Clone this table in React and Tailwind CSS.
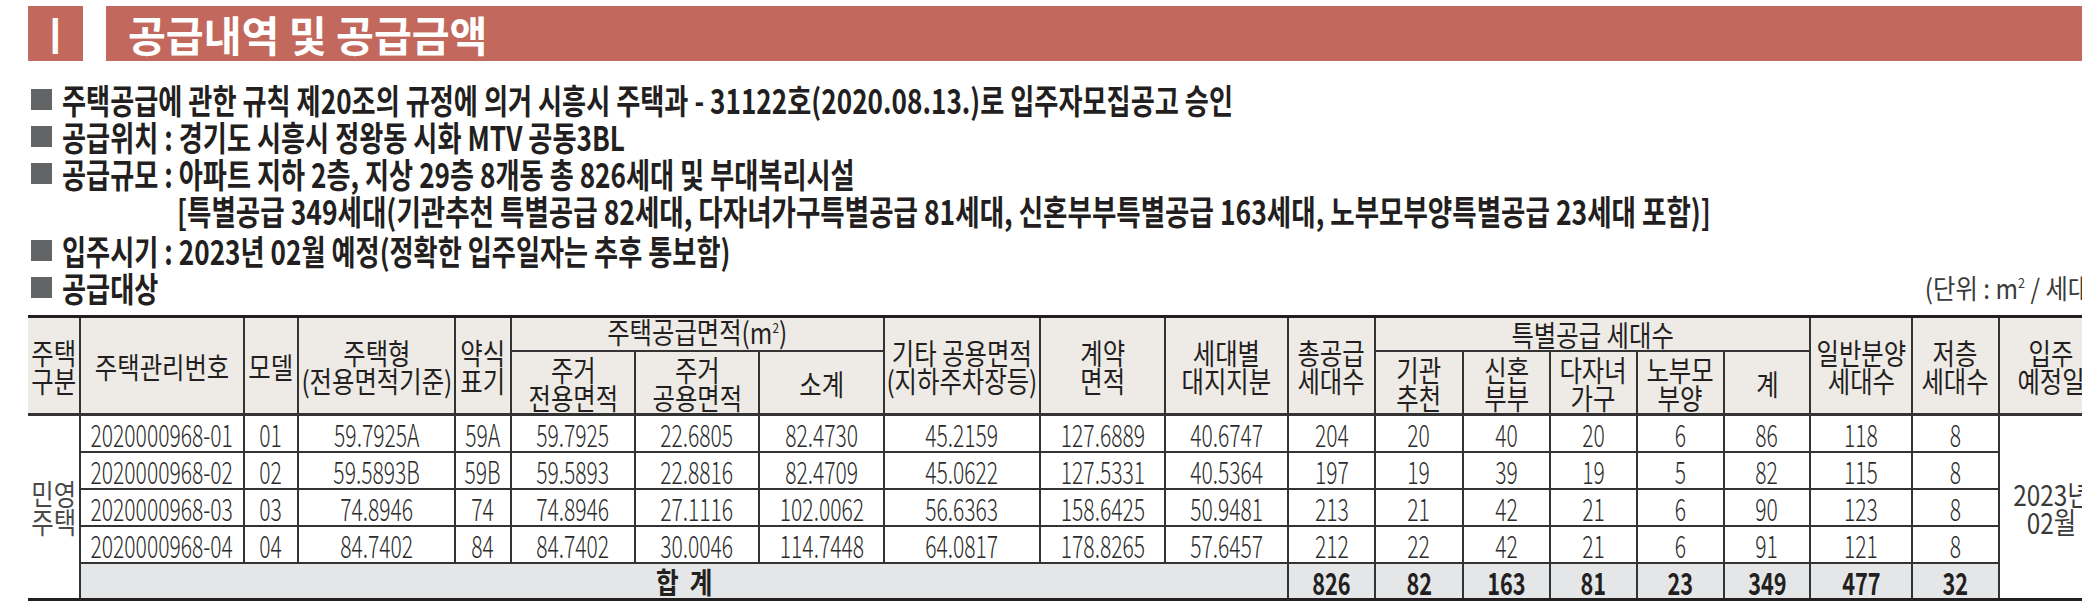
import React from "react";

const rows = [
  ["2020000968-01", "01", "59.7925A", "59A", "59.7925", "22.6805", "82.4730", "45.2159", "127.6889", "40.6747", "204", "20", "40", "20", "6", "86", "118", "8"],
  ["2020000968-02", "02", "59.5893B", "59B", "59.5893", "22.8816", "82.4709", "45.0622", "127.5331", "40.5364", "197", "19", "39", "19", "5", "82", "115", "8"],
  ["2020000968-03", "03", "74.8946", "74", "74.8946", "27.1116", "102.0062", "56.6363", "158.6425", "50.9481", "213", "21", "42", "21", "6", "90", "123", "8"],
  ["2020000968-04", "04", "84.7402", "84", "84.7402", "30.0046", "114.7448", "64.0817", "178.8265", "57.6457", "212", "22", "42", "21", "6", "91", "121", "8"],
];
const sums = ["826", "82", "163", "81", "23", "349", "477", "32"];

const hCell = "flex items-center justify-center bg-[#eeeae6] border-r-2 border-[#333]";
const hText = "whitespace-nowrap text-center text-[29px] leading-[28px] scale-x-[0.84] text-[#231f20]";
const dCell = "flex items-center justify-center bg-white border-r-2 border-b-2 border-[#333]";
const dText = "whitespace-nowrap text-[31px] leading-none font-light scale-x-[0.68] text-[#2b2b2b]";
const sCell = "flex items-center justify-center bg-[#e5e6e7] border-r-2 border-[#333]";
const sText = "whitespace-nowrap text-[31px] leading-none font-bold scale-x-[0.7] text-[#231f20]";

function H({ span, lines, bottom }) {
  return (
    <div className={`${hCell} ${span} ${bottom}`}>
      <div className={hText}>
        {lines.map((l, i) => (
          <div key={i}>{l}</div>
        ))}
      </div>
    </div>
  );
}

function M2() {
  return (
    <>
      m<span className="relative -top-[11px] text-[14px]">2</span>
    </>
  );
}

function Bullet({ children }) {
  return (
    <div className="flex h-[37px] items-center">
      <div className="ml-[3px] mr-[10px] h-[21px] w-[21px] shrink-0 bg-[#636466]" />
      <span className="inline-block origin-left scale-x-[0.77] whitespace-nowrap text-[34px] font-bold leading-[37px] text-[#231f20]">
        {children}
      </span>
    </div>
  );
}

export default function App() {
  return (
    <div className="h-[601px] w-[2082px] overflow-hidden bg-white font-['Noto_Sans_CJK_KR',sans-serif]">
      <div className="w-[2104px] pl-[28px]">
        {/* Title bar */}
        <div className="mt-[6px] flex h-[55px] gap-[23px]">
          <div className="flex w-[55px] items-center justify-center bg-[#c3685c] text-[44px] font-bold leading-[55px] text-white">
            <span className="inline-block scale-x-[0.8] scale-y-[1.1]">I</span>
          </div>
          <div className="flex flex-1 items-center bg-[#c3685c] pl-[22px]">
            <span className="inline-block origin-left scale-x-[0.98] whitespace-nowrap text-[42px] font-bold leading-[55px] text-white">
              공급내역 및 공급금액
            </span>
          </div>
        </div>

        {/* Bullet lines */}
        <div className="mt-[20px]">
          <Bullet>주택공급에 관한 규칙 제20조의 규정에 의거 시흥시 주택과 - 31122호(2020.08.13.)로 입주자모집공고 승인</Bullet>
          <Bullet>공급위치 : 경기도 시흥시 정왕동 시화 MTV 공동3BL</Bullet>
          <Bullet>공급규모 : 아파트 지하 2층, 지상 29층 8개동 총 826세대 및 부대복리시설</Bullet>
          <div className="flex h-[37px] items-center pl-[149px]">
            <span className="inline-block origin-left scale-x-[0.78] whitespace-nowrap text-[34px] font-bold leading-[37px] text-[#231f20]">
              [특별공급 349세대(기관추천 특별공급 82세대, 다자녀가구특별공급 81세대, 신혼부부특별공급 163세대, 노부모부양특별공급 23세대 포함)]
            </span>
          </div>
          <div className="mt-[3px]">
            <Bullet>입주시기 : 2023년 02월 예정(정확한 입주일자는 추후 통보함)</Bullet>
          </div>
          <div className="flex h-[37px] items-center justify-between">
            <Bullet>공급대상</Bullet>
            <span className="inline-block origin-right scale-x-[0.9] whitespace-nowrap pr-[6px] text-[27px] leading-none text-[#3a3a3a]">
              (단위 : <M2 /> / 세대)
            </span>
          </div>
        </div>

        {/* Table */}
        <div className="mt-[9px] grid grid-cols-[53px_164px_54px_157px_56px_124px_124px_125px_156px_125px_123px_87px_88px_87px_87px_87px_86px_102px_87px_104px] grid-rows-[34px_64px_37px_37px_37px_37px_34px] border-t-[3px] border-b-[3px] border-[#231f20]">
          <H span="row-span-2" bottom="border-b-[3px]" lines={["주택", "구분"]} />
          <H span="row-span-2" bottom="border-b-[3px]" lines={["주택관리번호"]} />
          <H span="row-span-2" bottom="border-b-[3px]" lines={["모델"]} />
          <H span="row-span-2" bottom="border-b-[3px]" lines={["주택형", "(전용면적기준)"]} />
          <H span="row-span-2" bottom="border-b-[3px]" lines={["약식", "표기"]} />
          <H span="col-span-3" bottom="border-b-2" lines={[<>주택공급면적(<M2 />)</>]} />
          <H span="row-span-2" bottom="border-b-[3px]" lines={["기타 공용면적", "(지하주차장등)"]} />
          <H span="row-span-2" bottom="border-b-[3px]" lines={["계약", "면적"]} />
          <H span="row-span-2" bottom="border-b-[3px]" lines={["세대별", "대지지분"]} />
          <H span="row-span-2" bottom="border-b-[3px]" lines={["총공급", "세대수"]} />
          <H span="col-span-5" bottom="border-b-2" lines={["특별공급 세대수"]} />
          <H span="row-span-2" bottom="border-b-[3px]" lines={["일반분양", "세대수"]} />
          <H span="row-span-2" bottom="border-b-[3px]" lines={["저층", "세대수"]} />
          <H span="row-span-2 border-r-0" bottom="border-b-[3px]" lines={["입주", "예정일"]} />

          <H span="" bottom="border-b-[3px]" lines={["주거", "전용면적"]} />
          <H span="" bottom="border-b-[3px]" lines={["주거", "공용면적"]} />
          <H span="" bottom="border-b-[3px]" lines={["소계"]} />
          <H span="" bottom="border-b-[3px]" lines={["기관", "추천"]} />
          <H span="" bottom="border-b-[3px]" lines={["신혼", "부부"]} />
          <H span="" bottom="border-b-[3px]" lines={["다자녀", "가구"]} />
          <H span="" bottom="border-b-[3px]" lines={["노부모", "부양"]} />
          <H span="" bottom="border-b-[3px]" lines={["계"]} />

          {rows.map((r, ri) => (
            <React.Fragment key={ri}>
              {ri === 0 && (
                <div className="row-span-5 flex items-center justify-center border-r-2 border-[#333] bg-white">
                  <div className="scale-x-[0.84] whitespace-nowrap text-center text-[29px] leading-[28px] text-[#4a4a4a]">
                    <div>민영</div>
                    <div>주택</div>
                  </div>
                </div>
              )}
              {r.map((v, ci) => (
                <div key={ci} className={dCell}>
                  <span className={dText}>{v}</span>
                </div>
              ))}
              {ri === 0 && (
                <div className="row-span-5 flex items-center justify-center bg-white">
                  <div className="scale-x-[0.84] whitespace-nowrap text-center text-[29px] leading-[28px] text-[#3a3a3a]">
                    <div>2023년</div>
                    <div>02월</div>
                  </div>
                </div>
              )}
            </React.Fragment>
          ))}

          <div className={`${sCell} col-span-10`}>
            <span className="scale-x-[0.85] whitespace-nowrap text-[29px] font-bold leading-none text-[#231f20]">
              합&nbsp;&nbsp;계
            </span>
          </div>
          {sums.map((v, i) => (
            <div key={i} className={sCell}>
              <span className={sText}>{v}</span>
            </div>
          ))}
        </div>
      </div>
    </div>
  );
}
